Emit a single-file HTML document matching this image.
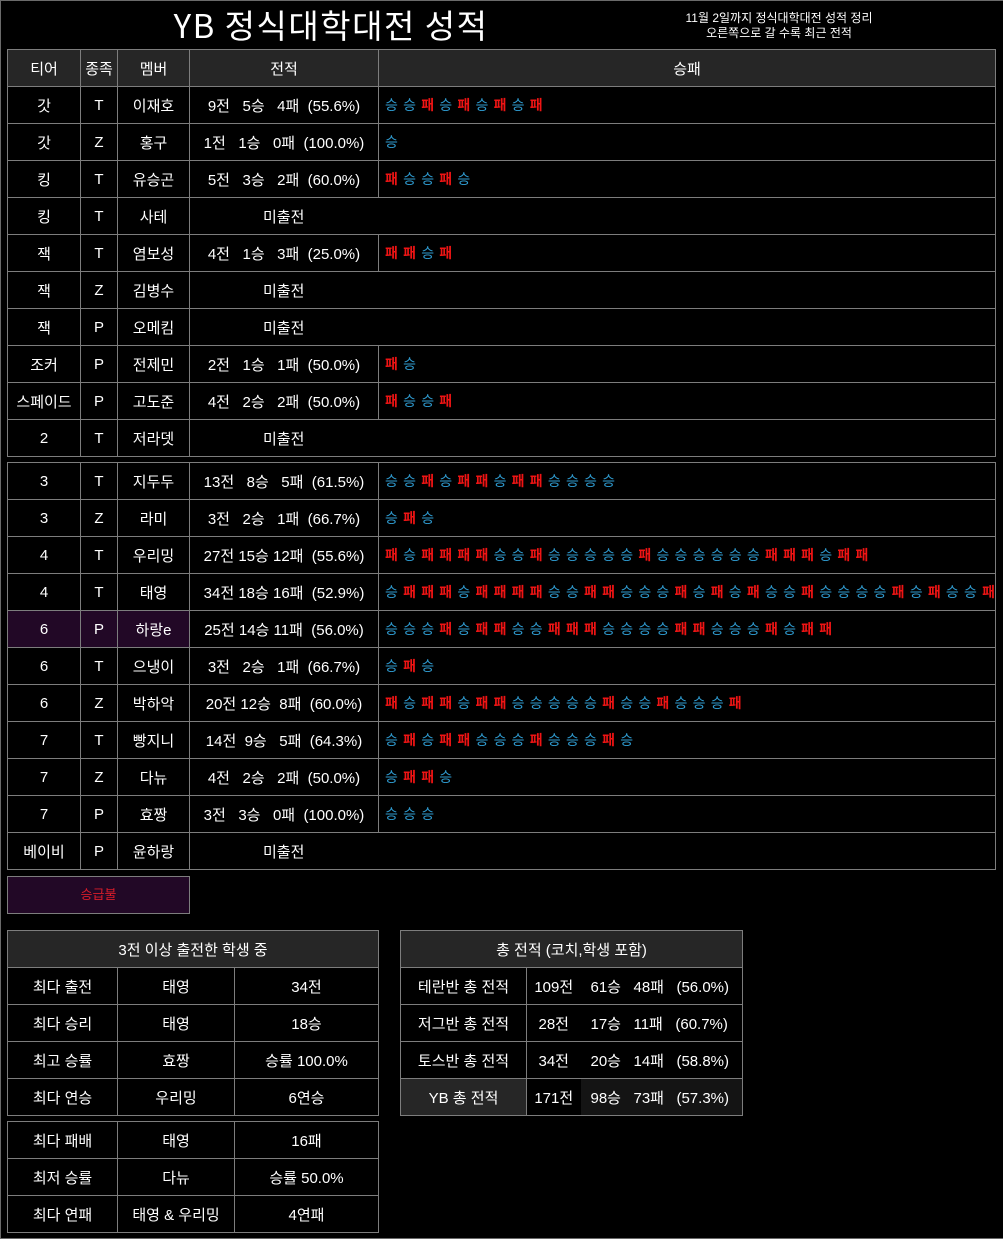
<!DOCTYPE html>
<html><head><meta charset="utf-8">
<style>
*{box-sizing:border-box}
body{margin:0;background:#000;width:1003px;height:1239px;overflow:hidden;font-family:"Liberation Sans","Noto Sans CJK KR",sans-serif;color:#fff}
#pg{position:absolute;left:0;top:0;width:1003px;height:1239px;border:1px solid #6a6a6a;border-right:none}
.title{position:absolute;left:0;width:660px;top:1px;text-align:center;font-size:33px;letter-spacing:1.5px;line-height:44px;font-family:"Noto Sans CJK KR","Liberation Sans",sans-serif}
.sub{position:absolute;left:638px;width:280px;top:10px;text-align:center;font-size:12px;line-height:15px}
table{position:absolute;border-collapse:collapse;font-size:15px;table-layout:fixed}
td{border:1px solid #7d7d7d;text-align:center;padding:0;height:37px;white-space:nowrap;overflow:visible}
.hd td{background:#262626}
td.r{text-align:left;padding-left:6px;letter-spacing:5.2px;font-size:14px;overflow:visible}
td.nd{text-align:left;padding-left:73px;border-right:none}
td.nd+td{border-left:none}
em{font-style:normal;color:#2f9bd0}
strong{color:#f01414;font-weight:bold}
.pur td.p{background:#220826}
</style></head><body><div id="pg">
<div class="title">YB 정식대학대전 성적</div>
<div class="sub">11월 2일까지 정식대학대전 성적 정리<br>오른쪽으로 갈 수록 최근 전적</div>

<table style="left:6px;top:48px;width:989px">
<colgroup><col style="width:73px"><col style="width:37px"><col style="width:72px"><col style="width:189px"><col></colgroup>
<tr class="hd"><td>티어</td><td>종족</td><td>멤버</td><td>전적</td><td>승패</td></tr>
<tr><td>갓</td><td>T</td><td>이재호</td><td>9전 &nbsp; 5승 &nbsp; 4패 &nbsp;(55.6%)</td><td class="r"><em>승</em><em>승</em><strong>패</strong><em>승</em><strong>패</strong><em>승</em><strong>패</strong><em>승</em><strong>패</strong></td></tr>
<tr><td>갓</td><td>Z</td><td>홍구</td><td>1전 &nbsp; 1승 &nbsp; 0패 &nbsp;(100.0%)</td><td class="r"><em>승</em></td></tr>
<tr><td>킹</td><td>T</td><td>유승곤</td><td>5전 &nbsp; 3승 &nbsp; 2패 &nbsp;(60.0%)</td><td class="r"><strong>패</strong><em>승</em><em>승</em><strong>패</strong><em>승</em></td></tr>
<tr><td>킹</td><td>T</td><td>사테</td><td class="nd">미출전</td><td></td></tr>
<tr><td>잭</td><td>T</td><td>염보성</td><td>4전 &nbsp; 1승 &nbsp; 3패 &nbsp;(25.0%)</td><td class="r"><strong>패</strong><strong>패</strong><em>승</em><strong>패</strong></td></tr>
<tr><td>잭</td><td>Z</td><td>김병수</td><td class="nd">미출전</td><td></td></tr>
<tr><td>잭</td><td>P</td><td>오메킴</td><td class="nd">미출전</td><td></td></tr>
<tr><td>조커</td><td>P</td><td>전제민</td><td>2전 &nbsp; 1승 &nbsp; 1패 &nbsp;(50.0%)</td><td class="r"><strong>패</strong><em>승</em></td></tr>
<tr><td>스페이드</td><td>P</td><td>고도준</td><td>4전 &nbsp; 2승 &nbsp; 2패 &nbsp;(50.0%)</td><td class="r"><strong>패</strong><em>승</em><em>승</em><strong>패</strong></td></tr>
<tr><td>2</td><td>T</td><td>저라뎃</td><td class="nd">미출전</td><td></td></tr>
</table>

<table style="left:6px;top:461px;width:989px">
<colgroup><col style="width:73px"><col style="width:37px"><col style="width:72px"><col style="width:189px"><col></colgroup>
<tr><td>3</td><td>T</td><td>지두두</td><td>13전 &nbsp; 8승 &nbsp; 5패 &nbsp;(61.5%)</td><td class="r"><em>승</em><em>승</em><strong>패</strong><em>승</em><strong>패</strong><strong>패</strong><em>승</em><strong>패</strong><strong>패</strong><em>승</em><em>승</em><em>승</em><em>승</em></td></tr>
<tr><td>3</td><td>Z</td><td>라미</td><td>3전 &nbsp; 2승 &nbsp; 1패 &nbsp;(66.7%)</td><td class="r"><em>승</em><strong>패</strong><em>승</em></td></tr>
<tr><td>4</td><td>T</td><td>우리밍</td><td>27전 15승 12패 &nbsp;(55.6%)</td><td class="r"><strong>패</strong><em>승</em><strong>패</strong><strong>패</strong><strong>패</strong><strong>패</strong><em>승</em><em>승</em><strong>패</strong><em>승</em><em>승</em><em>승</em><em>승</em><em>승</em><strong>패</strong><em>승</em><em>승</em><em>승</em><em>승</em><em>승</em><em>승</em><strong>패</strong><strong>패</strong><strong>패</strong><em>승</em><strong>패</strong><strong>패</strong></td></tr>
<tr><td>4</td><td>T</td><td>태영</td><td>34전 18승 16패 &nbsp;(52.9%)</td><td class="r"><em>승</em><strong>패</strong><strong>패</strong><strong>패</strong><em>승</em><strong>패</strong><strong>패</strong><strong>패</strong><strong>패</strong><em>승</em><em>승</em><strong>패</strong><strong>패</strong><em>승</em><em>승</em><em>승</em><strong>패</strong><em>승</em><strong>패</strong><em>승</em><strong>패</strong><em>승</em><em>승</em><strong>패</strong><em>승</em><em>승</em><em>승</em><em>승</em><strong>패</strong><em>승</em><strong>패</strong><em>승</em><em>승</em><strong>패</strong></td></tr>
<tr class="pur"><td class="p">6</td><td class="p">P</td><td class="p">하랑e</td><td>25전 14승 11패 &nbsp;(56.0%)</td><td class="r"><em>승</em><em>승</em><em>승</em><strong>패</strong><em>승</em><strong>패</strong><strong>패</strong><em>승</em><em>승</em><strong>패</strong><strong>패</strong><strong>패</strong><em>승</em><em>승</em><em>승</em><em>승</em><strong>패</strong><strong>패</strong><em>승</em><em>승</em><em>승</em><strong>패</strong><em>승</em><strong>패</strong><strong>패</strong></td></tr>
<tr><td>6</td><td>T</td><td>으냉이</td><td>3전 &nbsp; 2승 &nbsp; 1패 &nbsp;(66.7%)</td><td class="r"><em>승</em><strong>패</strong><em>승</em></td></tr>
<tr><td>6</td><td>Z</td><td>박하악</td><td>20전 12승 &nbsp;8패 &nbsp;(60.0%)</td><td class="r"><strong>패</strong><em>승</em><strong>패</strong><strong>패</strong><em>승</em><strong>패</strong><strong>패</strong><em>승</em><em>승</em><em>승</em><em>승</em><em>승</em><strong>패</strong><em>승</em><em>승</em><strong>패</strong><em>승</em><em>승</em><em>승</em><strong>패</strong></td></tr>
<tr><td>7</td><td>T</td><td>빵지니</td><td>14전 &nbsp;9승 &nbsp; 5패 &nbsp;(64.3%)</td><td class="r"><em>승</em><strong>패</strong><em>승</em><strong>패</strong><strong>패</strong><em>승</em><em>승</em><em>승</em><strong>패</strong><em>승</em><em>승</em><em>승</em><strong>패</strong><em>승</em></td></tr>
<tr><td>7</td><td>Z</td><td>다뉴</td><td>4전 &nbsp; 2승 &nbsp; 2패 &nbsp;(50.0%)</td><td class="r"><em>승</em><strong>패</strong><strong>패</strong><em>승</em></td></tr>
<tr><td>7</td><td>P</td><td>효짱</td><td>3전 &nbsp; 3승 &nbsp; 0패 &nbsp;(100.0%)</td><td class="r"><em>승</em><em>승</em><em>승</em></td></tr>
<tr><td>베이비</td><td>P</td><td>윤하랑</td><td class="nd">미출전</td><td></td></tr>
</table>

<div style="position:absolute;left:6px;top:875px;width:183px;height:38px;background:#220826;border:1px solid #7d7d7d;color:#d81c2a;font-size:13px;line-height:36px;text-align:center">승급불</div>

<table style="left:6px;top:929px;width:372px">
<colgroup><col style="width:110px"><col style="width:117px"><col></colgroup>
<tr class="hd"><td colspan="3">3전 이상 출전한 학생 중</td></tr>
<tr><td>최다 출전</td><td>태영</td><td>34전</td></tr>
<tr><td>최다 승리</td><td>태영</td><td>18승</td></tr>
<tr><td>최고 승률</td><td>효짱</td><td>승률 100.0%</td></tr>
<tr><td>최다 연승</td><td>우리밍</td><td>6연승</td></tr>
</table>
<table style="left:6px;top:1120px;width:372px">
<colgroup><col style="width:110px"><col style="width:117px"><col></colgroup>
<tr><td>최다 패배</td><td>태영</td><td>16패</td></tr>
<tr><td>최저 승률</td><td>다뉴</td><td>승률 50.0%</td></tr>
<tr><td>최다 연패</td><td>태영 &amp; 우리밍</td><td>4연패</td></tr>
</table>

<table style="left:399px;top:929px;width:343px">
<colgroup><col style="width:126px"><col style="width:54px"><col></colgroup>
<tr class="hd"><td colspan="3">총 전적 (코치,학생 포함)</td></tr>
<tr><td>테란반 총 전적</td><td style="border-right:none">109전</td><td style="border-left:none;text-align:left;padding-left:10px">61승 &nbsp; 48패 &nbsp; (56.0%)</td></tr>
<tr><td>저그반 총 전적</td><td style="border-right:none">28전</td><td style="border-left:none;text-align:left;padding-left:10px">17승 &nbsp; 11패 &nbsp; (60.7%)</td></tr>
<tr><td>토스반 총 전적</td><td style="border-right:none">34전</td><td style="border-left:none;text-align:left;padding-left:10px">20승 &nbsp; 14패 &nbsp; (58.8%)</td></tr>
<tr><td style="background:#262626">YB 총 전적</td><td style="border-right:none">171전</td><td style="border-left:none;text-align:left;padding-left:10px;background:#141414">98승 &nbsp; 73패 &nbsp; (57.3%)</td></tr>
</table>
</div></body></html>
